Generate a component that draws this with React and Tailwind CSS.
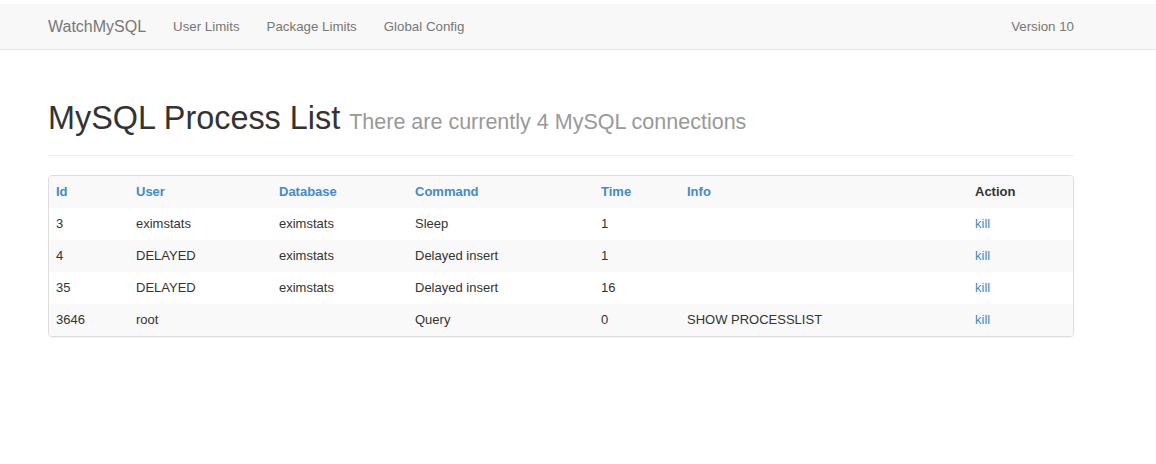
import React from "react";

const rows = [
  { id: "3", user: "eximstats", db: "eximstats", cmd: "Sleep", time: "1", info: "" },
  { id: "4", user: "DELAYED", db: "eximstats", cmd: "Delayed insert", time: "1", info: "" },
  { id: "35", user: "DELAYED", db: "eximstats", cmd: "Delayed insert", time: "16", info: "" },
  { id: "3646", user: "root", db: "", cmd: "Query", time: "0", info: "SHOW PROCESSLIST" },
];

const cols = ["Id", "User", "Database", "Command", "Time", "Info"];

export default function App() {
  return (
    <div
      className="min-h-[464px] bg-white text-[13px] text-[#333]"
      style={{ fontFamily: '"Liberation Sans", Arial, sans-serif' }}
    >
      <div className="pt-[4px]">
        <nav className="h-[46px] bg-[#f8f8f8] border-b border-[#e7e7e7]">
          <div className="ml-[48px] w-[1026px] h-[45px] flex items-center">
            <span className="text-[16px] text-[#777] leading-[18px]">WatchMySQL</span>
            <div className="flex items-center gap-[27px] ml-[27px] text-[13.3px] text-[#777] leading-[18px]">
              <span>User Limits</span>
              <span>Package Limits</span>
              <span>Global Config</span>
            </div>
            <span className="ml-auto text-[13.3px] text-[#777] leading-[18px]">Version 10</span>
          </div>
        </nav>
      </div>

      <div className="ml-[48px] w-[1026px]">
        <div className="mt-[50px] pb-[9px] border-b border-[#eee]">
          <h1 className="h-[36px] text-[32.4px] leading-[36px] mb-[10px] text-[#333] font-normal whitespace-nowrap">
            MySQL Process List{" "}
            <span className="text-[21.5px] leading-none text-[#999]">There are currently 4 MySQL connections</span>
          </h1>
        </div>

        <div className="mt-[19px] border border-[#ddd] rounded-[4px] shadow-[0_1px_1px_rgba(0,0,0,0.05)] overflow-hidden">
          <table className="w-full table-fixed border-collapse">
            <colgroup>
              <col className="w-[80px]" />
              <col className="w-[143px]" />
              <col className="w-[136px]" />
              <col className="w-[186px]" />
              <col className="w-[86px]" />
              <col className="w-[288px]" />
              <col />
            </colgroup>
            <thead>
              <tr className="bg-[#f9f9f9] h-[32px]">
                {cols.map((c) => (
                  <th key={c} className="text-left font-bold text-[#428bca] px-[7px] py-0 leading-[18px]">
                    {c}
                  </th>
                ))}
                <th className="text-left font-bold text-[#333] px-[7px] leading-[18px]">Action</th>
              </tr>
            </thead>
            <tbody>
              {rows.map((r, i) => (
                <tr key={r.id} className={`h-[32px] ${i % 2 === 1 ? "bg-[#f9f9f9]" : "bg-white"}`}>
                  <td className="px-[7px] leading-[18px]">{r.id}</td>
                  <td className="px-[7px] leading-[18px]">{r.user}</td>
                  <td className="px-[7px] leading-[18px]">{r.db}</td>
                  <td className="px-[7px] leading-[18px]">{r.cmd}</td>
                  <td className="px-[7px] leading-[18px]">{r.time}</td>
                  <td className="px-[7px] leading-[18px]">{r.info}</td>
                  <td className="px-[7px] leading-[18px] text-[#428bca]">kill</td>
                </tr>
              ))}
            </tbody>
          </table>
        </div>
      </div>
    </div>
  );
}
